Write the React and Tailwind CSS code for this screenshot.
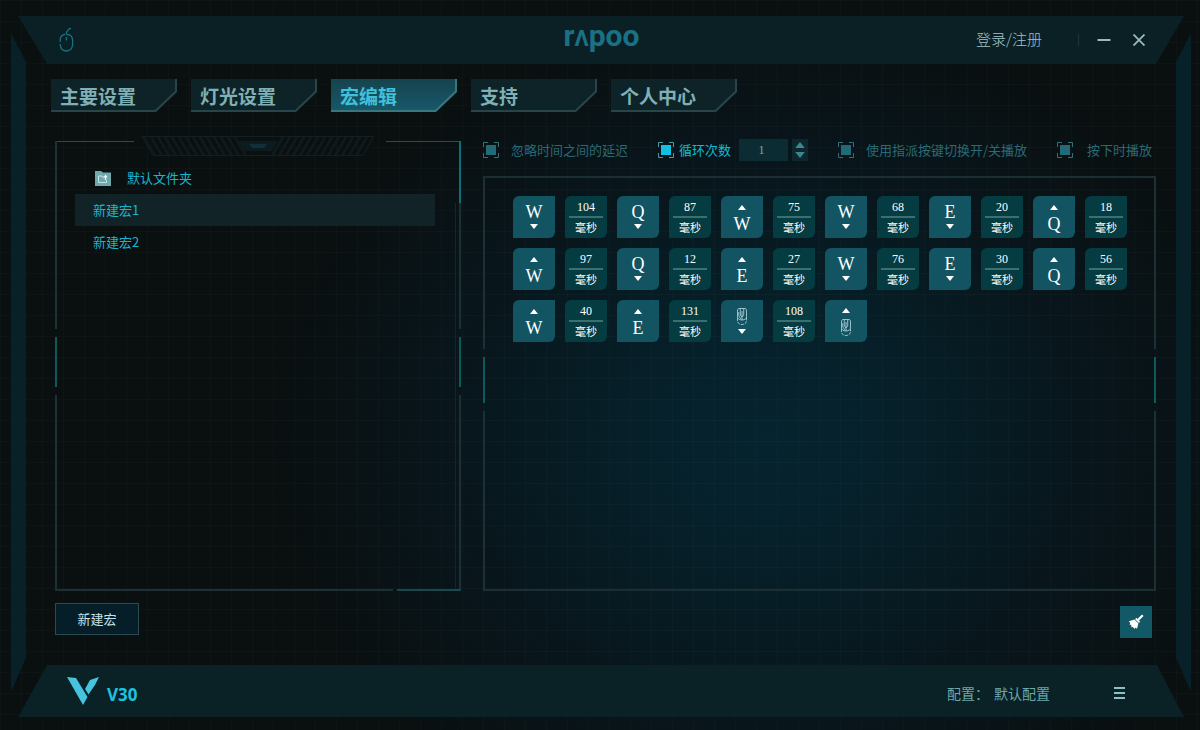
import React, { useState } from 'react';

const tabs = ['主要设置', '灯光设置', '宏编辑', '支持', '个人中心'];
const macros = ['新建宏1', '新建宏2'];

// Recorded steps: key events ("down" / "up") and the delays between them in ms
const steps = [
  { key: 'W', dir: 'down' }, { delay: 104 },
  { key: 'Q', dir: 'down' }, { delay: 87 },
  { key: 'W', dir: 'up' }, { delay: 75 },
  { key: 'W', dir: 'down' }, { delay: 68 },
  { key: 'E', dir: 'down' }, { delay: 20 },
  { key: 'Q', dir: 'up' }, { delay: 18 },
  { key: 'W', dir: 'up' }, { delay: 97 },
  { key: 'Q', dir: 'down' }, { delay: 12 },
  { key: 'E', dir: 'up' }, { delay: 27 },
  { key: 'W', dir: 'down' }, { delay: 76 },
  { key: 'E', dir: 'down' }, { delay: 30 },
  { key: 'Q', dir: 'up' }, { delay: 56 },
  { key: 'W', dir: 'up' }, { delay: 40 },
  { key: 'E', dir: 'up' }, { delay: 131 },
  { key: 'mouse', dir: 'down' }, { delay: 108 },
  { key: 'mouse', dir: 'up' },
];

const MouseIcon = () => (
  <svg width="16" height="26" viewBox="0 0 16 26" fill="none" stroke="#1b7084" strokeWidth="1.3" strokeLinecap="round">
    <path d="M8.300 7 C8 4 9.500 4.500 10.200 3 C10.600 2 11.500 1.500 12.500 1.500" />
    <path d="M6.500 7.500 C3.800 8 2.200 10 2.200 13 V14.500 M2.200 17.500 C2.500 21.500 5 24 8.500 24 C12.200 24 14.600 21 14.600 17.500 V13.500 C14.600 10 12.500 7.500 9 7.300" />
    <path d="M8.400 10.500 V13" />
  </svg>
);

const MouseKeyIcon = () => (
  <svg width="10" height="17" viewBox="0 0 10 17" fill="none" stroke="#b9dbe2" strokeWidth="0.8">
    <path d="M1.500 0.500 H8.500 L9.500 2 V9 C9.500 10.500 8 12 5 12 C2 12 0.500 10.500 0.500 9 V2 Z" />
    <path d="M3.300 0.500 V7 L5 9 L6.700 7 V0.500 M5 3 V12 M1.800 4 V8 L4 11" />
    <path d="M0.500 10 V13 C0.500 15 2.500 16.500 5 16.500 C7.500 16.500 9.500 15 9.500 13 V10" strokeDasharray="3 1" />
  </svg>
);

const VLogo = () => (
  <svg width="32" height="28" viewBox="0 0 32 28" fill="#45c3df">
    <path d="M0 0 L9 1 L20.500 20 L16 28 Z" />
    <path d="M32 0 L23 3 L18 12 L21.500 17.500 L28 8 Z" />
  </svg>
);

const FolderIcon = () => (
  <svg width="16" height="15" viewBox="0 0 16 15">
    <path d="M0 0 H6 L8 1.500 H16 V15 H0 Z" fill="#6fa9ae" />
    <path d="M3.500 5 H7 V6 H9 M3.500 5 V11.500 H11.500 V9" fill="none" stroke="#c5e4e4" strokeWidth="1" />
    <path d="M10.500 9 V5 M9 6.500 L10.500 4.500 L12 6.500" fill="none" stroke="#effafa" strokeWidth="1.200" />
  </svg>
);

const BroomIcon = () => (
  <svg width="16" height="16" viewBox="0 0 16 16">
    <path d="M14 2 L11 5" stroke="#fff" strokeWidth="2.200" strokeLinecap="square" />
    <path d="M8.300 3.800 L12.200 7.700 L10.800 9 L7.200 5.300 Z" fill="#fff" />
    <path d="M6.500 5.600 L10.400 9.500 L9 14.800 L7.400 13.600 L6.600 15 L4.600 12.800 L3.400 13.400 L3.300 11 L1.500 10.500 L2.300 9 L0.800 7.300 Z" fill="#fff" />
  </svg>
);

const Triangle = ({ dir, className }) => (
  <svg width="8" height="5" viewBox="0 0 8 5" fill="currentColor" className={className}>
    <path d={dir === 'up' ? 'M4 0 L8 5 H0 Z' : 'M0 0 H8 L4 5 Z'} />
  </svg>
);

const Tab = ({ label, active, onClick }) => (
  <button
    onClick={onClick}
    className={`flex h-[33px] w-[126px] text-left text-[19px] font-bold [clip-path:polygon(0_0,100%_0,100%_13px,calc(100%-21px)_100%,0_100%)] ${
      active ? 'bg-[#387780] text-[#3fc1dc]' : 'bg-[#28454a] text-[#7fb0b5]'
    }`}
  >
    <span
      className={`mr-0.5 mb-0.5 flex h-[31px] flex-1 items-center pt-1 pl-[9px] [clip-path:polygon(0_0,100%_0,100%_12px,calc(100%-20px)_100%,0_100%)] ${
        active ? 'bg-linear-to-b from-[#15434e] to-[#17586a]' : 'bg-[#0e2327]'
      }`}
    >
      {label}
    </span>
  </button>
);

const Option = ({ label, checked, onChange, gap = 'gap-3' }) => (
  <label className={`relative flex cursor-pointer items-center text-[13px] ${gap} ${checked ? 'text-[#12b9d6]' : 'text-[#296a75]'}`}>
    <input type="checkbox" className="peer sr-only" checked={checked} onChange={onChange} />
    <svg width="16" height="16" viewBox="0 0 16 16" fill="none" stroke={checked ? '#4a9ba5' : '#35707a'}>
      <path d="M0.500 5 V0.500 H5 M11 0.500 H15.500 V5 M15.500 11 V15.500 H11 M5 15.500 H0.500 V11" />
      <rect x="3" y="3" width="10" height="10" stroke="none" fill={checked ? '#0fc0e2' : '#216a78'} />
    </svg>
    {label}
  </label>
);

const Step = ({ step }) => {
  if (step.delay) {
    return (
      <div className="flex size-[42px] flex-col items-center rounded-tl-md rounded-br-md bg-[#053c41] pt-[3px] text-white">
        <span className="font-['Liberation_Serif',serif] text-xs leading-4">{step.delay}</span>
        <span className="mt-px h-0.5 w-[34px] bg-[#3a7071]" />
        <span className="text-[11px] leading-[18px]">毫秒</span>
      </div>
    );
  }
  return (
    <button
      className={`flex size-[42px] items-center justify-start rounded-tl-md rounded-br-md bg-[#135463] text-white ${
        step.dir === 'up' ? 'flex-col-reverse gap-1.5 pb-1.5' : 'flex-col gap-1 pt-2'
      }`}
    >
      {step.key === 'mouse' ? (
        <MouseKeyIcon />
      ) : (
        <span className="font-['Liberation_Serif',serif] text-lg leading-4">{step.key}</span>
      )}
      <Triangle dir={step.dir} />
    </button>
  );
};

// Vertical frame line: dim, short bright part, dim
const SideLine = ({ className }) => (
  <div className={`pointer-events-none absolute inset-y-0 flex flex-col gap-2 ${className}`}>
    <span className="flex-[190] bg-[#1d3135]" />
    <span className="flex-[50] bg-[#0b5a5c]" />
    <span className="flex-[198] bg-[#1d3135]" />
  </div>
);

const MacroPanelFrame = () => (
  <>
    <div className="absolute inset-x-0 top-0 flex justify-between">
      <span className="h-px w-[79px] bg-[#31484b]" />
      <span className="h-px w-[75px] bg-[#31484b]" />
    </div>
    <SideLine className="left-0 w-0.5" />
    <SideLine className="right-0 w-0.5" />
    <span className="absolute top-0 right-0 h-[62px] w-0.5 bg-[#0c7078]" />
    <span className="absolute top-[62px] right-[5px] bottom-0 w-px bg-[#14262a]" />
    <div className="absolute inset-x-0 bottom-0 flex gap-1">
      <span className="h-0.5 flex-1 bg-[#1b3135]" />
      <span className="h-0.5 w-16 bg-[#174a50]" />
    </div>
    <svg className="absolute -top-[5px] left-1/2 -translate-x-1/2" width="232" height="20" viewBox="0 0 232 20">
      <defs>
        <pattern id="hatchL" width="7" height="20" patternUnits="userSpaceOnUse" patternTransform="skewX(30)">
          <rect width="3" height="20" fill="#10191b" />
        </pattern>
        <pattern id="hatchR" width="7" height="20" patternUnits="userSpaceOnUse" patternTransform="skewX(-30)">
          <rect width="3" height="20" fill="#10191b" />
        </pattern>
      </defs>
      <path d="M0 0.500 H96 L108 19.500 H11 Z" fill="url(#hatchL)" />
      <path d="M136 0.500 H232 L221 19.500 H124 Z" fill="url(#hatchR)" />
      <path d="M0 0.500 H232 L221 19.500 H11 Z" fill="none" stroke="#131f21" />
      <path d="M96 5 H136 L130 15 H102 Z" fill="#0b1c21" />
      <path d="M107 8 H125 L122 12 H110 Z" fill="#12303a" />
    </svg>
  </>
);

const App = () => {
  const [activeTab, setActiveTab] = useState('宏编辑');
  const [selected, setSelected] = useState('新建宏1');
  const [loops, setLoops] = useState(1);
  const [options, setOptions] = useState({ ignore: false, loop: true, toggle: false, hold: false });

  const flip = (name) => () => setOptions(prev => ({ ...prev, [name]: !prev[name] }));

  return (
    <div className="min-h-screen bg-[#0a0f10] bg-[radial-gradient(ellipse_500px_430px_at_64%_60%,#05242f_0%,#06202a_25%,#08161c_62%,#0a0f10_100%)] font-['Noto_Sans_CJK_SC',sans-serif]">
      <div className="flex min-h-screen flex-col bg-[linear-gradient(to_right,#8fb4b408_1px,transparent_1px),linear-gradient(to_bottom,#8fb4b408_1px,transparent_1px)] bg-size-[21px_21px] pt-4 pb-[13px]">
        {/* Title bar */}
        <header className="mr-4 ml-[18px] grid h-12 grid-cols-[1fr_auto_1fr] items-center bg-[#0a2024] pr-[39px] pb-[3px] pl-10 [clip-path:polygon(0_0,100%_0,calc(100%-28px)_100%,29px_100%)]">
          <MouseIcon />
          <h1 className="pb-1 font-['Roboto',sans-serif] text-[30px] leading-10 font-bold text-[#1b7086]">
            r<span className="text-[22px]">Λ</span>poo
          </h1>
          <div className="flex items-center justify-end">
            <a href="#login" className="text-[15px] font-light text-[#a3c4c7]">登录/注册</a>
            <span className="mr-[18px] ml-9 h-3 w-px bg-[#17373c]" />
            <button aria-label="最小化" className="mr-[22px] text-[#9db9bb]">
              <svg width="14" height="14" viewBox="0 0 14 14" stroke="currentColor" strokeWidth="2"><path d="M0.500 7 H13.500" /></svg>
            </button>
            <button aria-label="关闭" className="text-[#9db9bb]">
              <svg width="12" height="12" viewBox="0 0 12 12" stroke="currentColor" strokeWidth="1.800"><path d="M0.500 0.500 L11.500 11.500 M11.500 0.500 L0.500 11.500" /></svg>
            </button>
          </div>
        </header>

        <div className="flex flex-1 justify-between">
          <span className="-mt-[31px] -mb-[27px] ml-[11px] w-[15px] bg-[#082028] [clip-path:polygon(0_0,100%_29px,100%_calc(100%-34px),0_100%)]" />

          <main className="flex flex-1 flex-col pt-[15px] pr-5 pl-[25px]">
            <nav className="flex gap-3.5">
              {tabs.map(tab => (
                <Tab key={tab} label={tab} active={tab === activeTab} onClick={() => setActiveTab(tab)} />
              ))}
            </nav>

            <div className="mt-6 ml-1 grid flex-1 grid-cols-[406px_1fr] gap-[22px]">
              {/* Macro list */}
              <section className="flex flex-col">
                <div className="relative mt-[5px] flex-1 pt-[21px] pr-[26px] pl-5">
                  <MacroPanelFrame />
                  <div className="flex h-8 items-center gap-4 pl-5 text-[13px] text-[#19b5cf]">
                    <FolderIcon />
                    默认文件夹
                  </div>
                  <ul>
                    {macros.map(macro => (
                      <li key={macro}>
                        <button
                          onClick={() => setSelected(macro)}
                          className={`h-8 w-full pl-[18px] text-left text-[13px] text-[#19b5cf] ${macro === selected ? 'bg-[#122327]' : ''}`}
                        >
                          {macro}
                        </button>
                      </li>
                    ))}
                  </ul>
                </div>
                <div className="h-[74px] pt-3">
                  <button className="h-8 w-[84px] border border-[#2a4a52] bg-[#061e28] text-[13px] text-[#c5e2e6]">新建宏</button>
                </div>
              </section>

              {/* Step editor */}
              <section className="flex flex-col">
                <div className="flex h-7 items-center justify-between pr-1">
                  <Option label="忽略时间之间的延迟" checked={options.ignore} onChange={flip('ignore')} />
                  <div className="flex items-center">
                    <Option label="循环次数" checked={options.loop} onChange={flip('loop')} gap="gap-[5px]" />
                    <input
                      type="text"
                      aria-label="循环次数"
                      value={loops}
                      onChange={e => setLoops(Number(e.target.value) || 1)}
                      className="ml-2 h-[22px] w-[49px] bg-[#0a2c32] pr-1 text-center font-['Liberation_Serif',serif] text-xs text-[#7fa9ac] outline-none"
                    />
                    <div className="ml-1 flex h-[22px] w-4 flex-col items-center justify-center gap-1 bg-[#0c282e] text-[#3d8790]">
                      <button aria-label="增加" onClick={() => setLoops(loops + 1)}>
                        <Triangle dir="up" className="h-1.5 w-2.5" />
                      </button>
                      <button aria-label="减少" onClick={() => setLoops(Math.max(1, loops - 1))}>
                        <Triangle dir="down" className="h-1.5 w-2.5" />
                      </button>
                    </div>
                  </div>
                  <Option label="使用指派按键切换开/关播放" checked={options.toggle} onChange={flip('toggle')} />
                  <Option label="按下时播放" checked={options.hold} onChange={flip('hold')} gap="gap-3.5" />
                </div>

                <div className="relative mt-3 flex-1 pt-5 pr-5 pl-[30px]">
                  <span className="absolute inset-x-0 top-0 h-0.5 bg-[#1a2e33]" />
                  <span className="absolute inset-x-0 bottom-0 h-0.5 bg-[#1a2e33]" />
                  <SideLine className="left-0 w-0.5" />
                  <SideLine className="right-0 w-0.5" />
                  <div className="flex flex-wrap gap-2.5">
                    {steps.map((step, index) => (
                      <Step key={index} step={step} />
                    ))}
                  </div>
                </div>
                <div className="flex h-[74px] justify-end pt-[15px] pr-1">
                  <button aria-label="清空" className="flex size-8 items-center justify-center bg-[#135867]">
                    <BroomIcon />
                  </button>
                </div>
              </section>
            </div>
          </main>

          <span className="-mt-[31px] -mb-[27px] mr-[9px] w-[15px] bg-[#082028] [clip-path:polygon(100%_0,100%_100%,0_calc(100%-34px),0_29px)]" />
        </div>

        {/* Device bar */}
        <footer className="mr-4 ml-[18px] flex h-[52px] items-center justify-between bg-[#0a2125] pr-[58px] pl-[49px] [clip-path:polygon(29px_0,calc(100%-27px)_0,100%_100%,0_100%)]">
          <div className="flex items-center gap-2">
            <VLogo />
            <span className="pt-2 font-['Noto_Sans',sans-serif] text-[17px] font-bold text-[#1cc3e0]">V30</span>
          </div>
          <div className="flex items-center pt-1 text-sm text-[#6ba7ad]">
            <span className="mr-[5px]">配置：</span>
            <span>默认配置</span>
            <button aria-label="菜单" className="ml-16 text-[#8fbfc3]">
              <svg width="12" height="12" viewBox="0 0 12 12" fill="currentColor"><path d="M0 0 H11 V2 H0 Z M0 5 H11 V7 H0 Z M0 10 H11 V12 H0 Z" /></svg>
            </button>
          </div>
        </footer>
      </div>
    </div>
  );
};

export default App;
